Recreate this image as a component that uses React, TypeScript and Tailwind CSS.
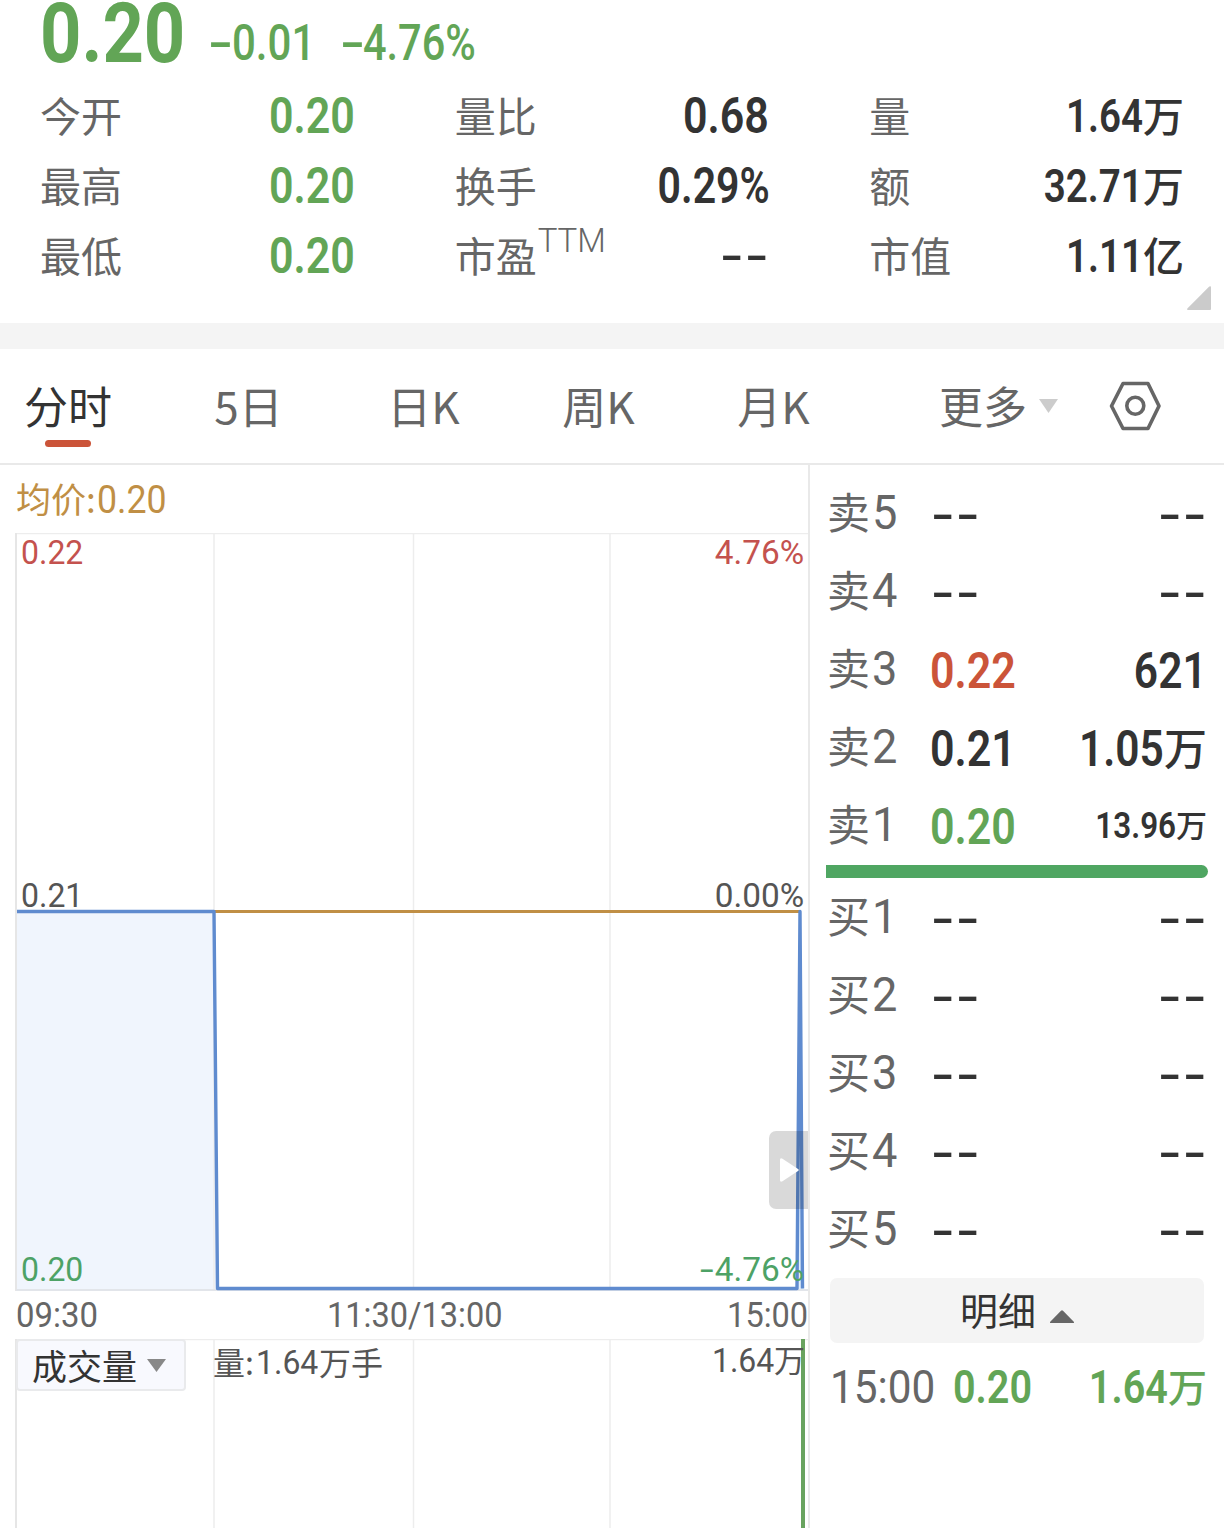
import { clsx } from "clsx";
import type { ReactNode } from "react";

type Tone = "up" | "down" | "flat";

const toneClass: Record<Tone, string> = {
  up: "text-[#cb5439]",
  down: "text-[#62a556]",
  flat: "text-[#333333]",
};

type Stat = {
  label: string;
  sup?: string;
  value: string;
  unit?: string;
  tone: Tone;
};

const stats: Stat[] = [
  { label: "今开", value: "0.20", tone: "down" },
  { label: "量比", value: "0.68", tone: "flat" },
  { label: "量", value: "1.64", unit: "万", tone: "flat" },
  { label: "最高", value: "0.20", tone: "down" },
  { label: "换手", value: "0.29%", tone: "flat" },
  { label: "额", value: "32.71", unit: "万", tone: "flat" },
  { label: "最低", value: "0.20", tone: "down" },
  { label: "市盈", sup: "TTM", value: "--", tone: "flat" },
  { label: "市值", value: "1.11", unit: "亿", tone: "flat" },
];

type Level = {
  side: string;
  level: number;
  price: string;
  volume: string;
  unit?: string;
  tone: Tone;
  small?: boolean;
};

const asks: Level[] = [
  { side: "卖", level: 5, price: "--", volume: "--", tone: "flat" },
  { side: "卖", level: 4, price: "--", volume: "--", tone: "flat" },
  { side: "卖", level: 3, price: "0.22", volume: "621", tone: "up" },
  { side: "卖", level: 2, price: "0.21", volume: "1.05", unit: "万", tone: "flat" },
  { side: "卖", level: 1, price: "0.20", volume: "13.96", unit: "万", tone: "down", small: true },
];

const bids: Level[] = [1, 2, 3, 4, 5].map((level) => ({
  side: "买",
  level,
  price: "--",
  volume: "--",
  tone: "flat",
}));

const tabs = ["5日", "日K", "周K", "月K"];

// Condensed figures, squeezed towards the edge they are aligned to
function Num({
  children,
  className,
  right,
}: {
  children: ReactNode;
  className?: string;
  right?: boolean;
}) {
  return (
    <span
      className={clsx(
        "inline-block font-[Roboto,sans-serif] whitespace-nowrap",
        right ? "origin-right" : "origin-left",
        className,
      )}
    >
      {children}
    </span>
  );
}

// Wide hyphen, its box is as wide as one figure
function Minus({ className }: { className?: string }) {
  return (
    <span className={clsx("inline-flex justify-center font-[Roboto,sans-serif]", className)}>
      <span className="inline-block scale-x-[1.45]">-</span>
    </span>
  );
}

function Empty() {
  return (
    <span className="flex text-[46px] leading-none font-medium text-[#333333]">
      <Minus className="w-[25px]" />
      <Minus className="w-[25px]" />
    </span>
  );
}

function StatCell({ label, sup, value, unit, tone }: Stat) {
  return (
    <div className="flex h-[70px] items-center justify-between">
      <span className="relative pb-[3px] text-[41px] leading-[67px] text-[#666666]">
        {label}
        {sup && (
          <span className="absolute top-0 left-full ml-px font-[Roboto,sans-serif] text-[33px] leading-[40px] font-light">
            {sup}
          </span>
        )}
      </span>
      {value === "--" ? (
        <Empty />
      ) : (
        <span className={clsx("flex items-center", toneClass[tone])}>
          <Num
            right
            className={clsx(
              "leading-[68px] font-semibold",
              unit ? "text-[47px]" : "text-[50px]",
              value.endsWith("%") || unit ? "scale-x-[0.82]" : "scale-x-[0.86]",
            )}
          >
            {value}
          </Num>
          {unit && (
            <span className="pb-[3px] text-[41px] leading-[67px] font-medium">{unit}</span>
          )}
        </span>
      )}
    </div>
  );
}

function LevelRow({ side, level, price, volume, unit, tone, small }: Level) {
  return (
    <div className="flex h-[78px] items-center px-[17px]">
      <span className="flex w-[103px] items-center text-[43px] text-[#666666]">
        <span className="pb-[5px] leading-[73px]">{side}</span>
        <Num className="ml-[2px] scale-x-[0.94] text-[48px]">{level}</Num>
      </span>
      {price === "--" ? (
        <span className="pt-[3px]">
          <Empty />
        </span>
      ) : (
        <Num
          className={clsx(
            "scale-x-[0.86] pt-1 text-[50px] leading-[74px] font-semibold",
            toneClass[tone],
          )}
        >
          {price}
        </Num>
      )}
      <span className="ml-auto flex items-center text-[#333333]">
        {volume === "--" ? (
          <span className="pt-[3px]">
            <Empty />
          </span>
        ) : (
          <Num
            right
            className={clsx(
              "scale-x-[0.85] font-semibold",
              small ? "pt-[2px] text-[37px]" : "pt-1 text-[50px]",
            )}
          >
            {volume}
          </Num>
        )}
        {unit && (
          <span className={clsx("font-medium", small ? "pb-[2px] text-[31px]" : "pb-px text-[43px]")}>
            {unit}
          </span>
        )}
      </span>
    </div>
  );
}

function QuoteHeader() {
  return (
    <header className="relative h-[323px] shrink-0 bg-white px-[40px]">
      <div className="flex h-[81px] items-start text-[#62a556]">
        <Num className="w-[169px] scale-x-[0.86] text-[84px] leading-[67px] font-bold">0.20</Num>
        <span className="flex w-[132px] pt-[5px] text-[50px] leading-[77px] font-medium">
          <Minus className="w-[22px]" />
          <Num className="ml-px scale-x-[0.84]">0.01</Num>
        </span>
        <span className="flex pt-[5px] text-[50px] leading-[77px] font-medium">
          <Minus className="w-[22px]" />
          <Num className="scale-x-[0.83]">4.76%</Num>
        </span>
      </div>
      <div className="grid grid-cols-3 gap-x-[100px]">
        {stats.map((stat) => (
          <StatCell key={stat.label} {...stat} />
        ))}
      </div>
      <svg className="absolute right-[13px] bottom-[13px]" width="24" height="24" viewBox="0 0 24 24">
        <path d="M1 24h22a1 1 0 0 0 1-1V1.500c0-1.300-1-1.800-2-.8L.6 22.200C-.3 23.200 0 24 1 24Z" fill="#cbcbcb" />
      </svg>
    </header>
  );
}

function TabBar() {
  return (
    <nav className="flex h-[116px] shrink-0 border-b-2 border-[#e9e9e9] bg-white text-[44px] leading-[112px] text-[#666666]">
      <div className="relative mr-[25px] w-[136px] text-center text-[#333333]">
        分时
        <span className="absolute top-[91px] left-[45px] h-[7px] w-[46px] rounded-full bg-[#cb5439]" />
      </div>
      {tabs.map((tab) => (
        <div key={tab} className="w-[175px] text-center">
          {tab}
        </div>
      ))}
      <div className="ml-[78px] flex">
        更多
        <svg className="mt-[50px] ml-[12px]" width="19" height="14" viewBox="0 0 19 14">
          <path d="M0 0h19L9.500 14Z" fill="#cccccc" />
        </svg>
      </div>
      <svg
        className="mt-[31px] ml-[50px]"
        width="54"
        height="52"
        viewBox="0 0 54 52"
        fill="none"
        stroke="#666666"
        strokeWidth="3.600"
        strokeLinejoin="round"
      >
        <path d="M15 3.500h25L51 26 40 48.500H15L3.500 26Z" />
        <circle cx="27.300" cy="25.700" r="8.500" />
      </svg>
    </nav>
  );
}

function PriceChart() {
  return (
    <div className="relative h-[758px]">
      <svg className="block" width="808" height="758" viewBox="0 533 808 758" fill="none">
        <path d="M17 912H214L217 1289H17Z" fill="#f0f5fd" />
        <path d="M797 1289 800 912 803 1289Z" fill="#e3f0fd" />
        <path d="M16 533.500H808M214 533V1290M413.500 533V1290M610 533V1290" stroke="#ededed" strokeWidth="1.500" />
        <path d="M16 533V1291" stroke="#e6e6e6" strokeWidth="2" />
        <path d="M16 1290H808" stroke="#e2e5ea" strokeWidth="2" />
        <path d="M214 911.500H801" stroke="#c08f45" strokeWidth="3" />
        <path
          d="M17 911.500H214L217.500 1288.500H797L800 911.500 802.500 1288.500"
          stroke="#5f8bcf"
          strokeWidth="3.400"
          strokeLinejoin="round"
        />
      </svg>
      <div className="absolute inset-0 flex flex-col pr-[4px] pl-[21px] text-[34px] leading-[39px]">
        <div className="flex justify-between text-[#c4524e]">
          <Num className="scale-x-[0.94]">0.22</Num>
          <Num right className="scale-x-[0.98]">4.76%</Num>
        </div>
        <div className="mt-[304px] flex justify-between text-[#555555]">
          <Num className="scale-x-[0.94]">0.21</Num>
          <Num right className="scale-x-[0.98]">0.00%</Num>
        </div>
        <div className="mt-[335px] flex justify-between text-[#4da266]">
          <Num className="scale-x-[0.94]">0.20</Num>
          <span className="flex">
            <Minus className="w-[12px]" />
            <Num right className="scale-x-[0.98]">4.76%</Num>
          </span>
        </div>
      </div>
      <button
        type="button"
        className="absolute top-[598px] right-0 flex h-[78px] w-[39px] items-center rounded-l-[7px] bg-black/15 pl-[11px]"
      >
        <svg width="19" height="24" viewBox="0 0 19 24">
          <path d="M0 2Q0-.5 2.500 .8L18 11q1.500 1 0 2L2.500 23.200Q0 24.500 0 22Z" fill="#ffffff" />
        </svg>
      </button>
    </div>
  );
}

function VolumeChart() {
  return (
    <div className="relative flex-1">
      <svg className="block" width="808" height="189" viewBox="0 1339 808 189" fill="none">
        <path d="M16 1339.500H808M214 1339V1528M413.500 1339V1528M610 1339V1528" stroke="#ededed" strokeWidth="1.500" />
        <path d="M16 1339V1528" stroke="#e6e6e6" strokeWidth="2" />
        <path d="M803 1339V1528" stroke="#69a35f" strokeWidth="4" />
      </svg>
      <div className="absolute inset-x-0 top-0 flex items-start pr-[3px] pl-[16px] text-[#555555]">
        <button
          type="button"
          className="flex h-[52px] w-[170px] items-center rounded-[4px] border-2 border-[#e9eaec] bg-[#f8f9fe] pl-[14px] text-[35px] text-[#333333]"
        >
          成交量
          <svg className="ml-[10px]" width="19" height="13" viewBox="0 0 19 13">
            <path d="M0 0h19L9.500 13Z" fill="#888888" />
          </svg>
        </button>
        <span className="ml-[27px] flex items-center text-[32px] leading-[43px]">
          量:
          <Num className="mt-[2px] ml-[2px] w-[63px] scale-x-[0.94] text-[34px]">1.64</Num>
          万手
        </span>
        <span className="ml-auto flex items-center text-[31px] leading-[38px]">
          <Num right className="mt-[2px] scale-x-[0.94] text-[34px]">1.64</Num>
          万
        </span>
      </div>
    </div>
  );
}

export default function App() {
  return (
    <div className="flex h-[1528px] w-[1224px] flex-col overflow-hidden bg-white font-['Noto_Sans_CJK_SC',sans-serif]">
      <QuoteHeader />
      <div className="h-[26px] shrink-0 bg-[#f4f4f4]" />
      <TabBar />
      <main className="flex flex-1">
        <section className="flex w-[810px] flex-col border-r-2 border-[#e9e9e9]">
          <div className="flex h-[68px] items-center pl-[16px] text-[35px] leading-[66px] text-[#c08f45]">
            <span className="pb-[2px]">均价:</span>
            <Num className="mt-[2px] ml-px scale-x-[0.94] text-[38px]">0.20</Num>
          </div>
          <PriceChart />
          <div className="flex h-[48px] items-center justify-between pt-[2px] pl-[16px] text-[35px] text-[#666666]">
            <Num className="scale-x-[0.94]">09:30</Num>
            <Num className="ml-[18px] scale-x-[0.93]">11:30/13:00</Num>
            <Num right className="scale-x-[0.93]">15:00</Num>
          </div>
          <VolumeChart />
        </section>
        <aside className="flex-1 pt-[9px]">
          {asks.map((row) => (
            <LevelRow key={row.level} {...row} />
          ))}
          <div className="mt-px mr-[16px] ml-[16px] h-[13px] rounded-r-full bg-[#4fa662]" />
          {bids.map((row) => (
            <LevelRow key={row.level} {...row} />
          ))}
          <button
            type="button"
            className="mt-[10px] ml-[20px] flex h-[65px] w-[374px] items-center justify-center rounded-[7px] bg-[#f4f4f4] text-[38px] text-[#333333]"
          >
            <span className="pb-[4px]">明细</span>
            <svg className="mt-[11px] ml-[14px]" width="24" height="13" viewBox="0 0 24 13">
              <path d="M1 13q-2 0-.5-1.500L11 .7q1-1 2 0l10.500 10.800Q25 13 23 13Z" fill="#666666" />
            </svg>
          </button>
          <div className="mt-[9px] flex h-[70px] items-center pr-[17px] pl-[20px]">
            <Num className="w-[123px] scale-x-[0.92] text-[46px] text-[#666666]">15:00</Num>
            <Num className="scale-x-[0.86] text-[46px] font-semibold text-[#62a556]">0.20</Num>
            <span className="ml-auto flex items-center text-[#62a556]">
              <Num right className="scale-x-[0.86] text-[46px] font-semibold">1.64</Num>
              <span className="pb-[3px] text-[39px] font-medium">万</span>
            </span>
          </div>
        </aside>
      </main>
    </div>
  );
}
